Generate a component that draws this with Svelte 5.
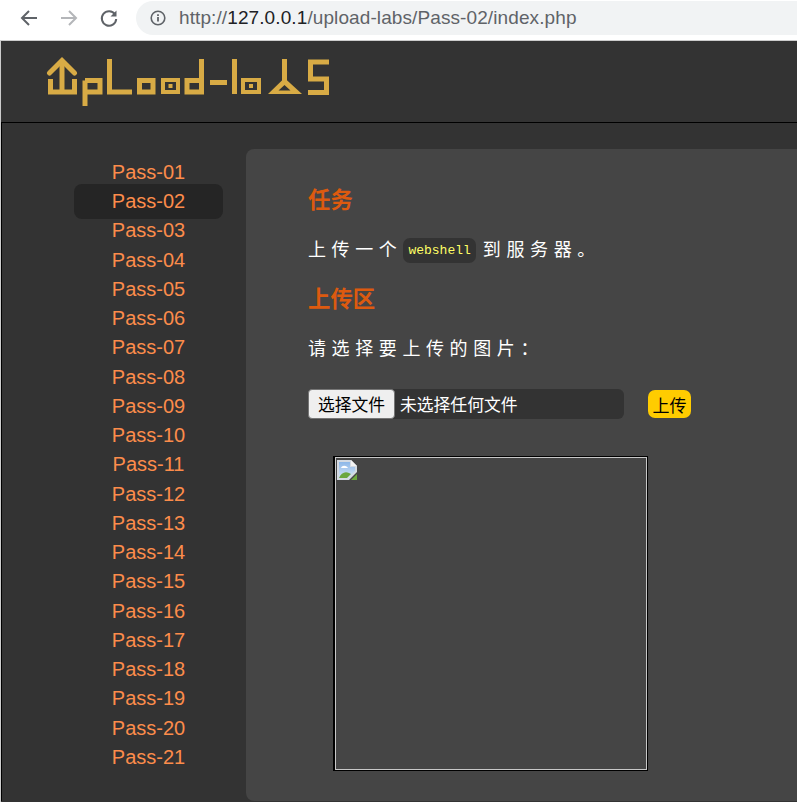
<script>
  const passes = Array.from({ length: 21 }, (_, i) => 'Pass-' + String(i + 1).padStart(2, '0'));
</script>

<div class="browser-bar">
  <div class="nav-icons">
    <svg class="nav-icon" width="20" height="20" viewBox="0 0 20 20" fill="none" stroke="#5f6368" stroke-width="2">
      <path d="M18 10H3M10 3l-7 7 7 7"/>
    </svg>
    <svg class="nav-icon" width="20" height="20" viewBox="0 0 20 20" fill="none" stroke="#b4b6b9" stroke-width="2">
      <path d="M2 10h15M10 3l7 7-7 7"/>
    </svg>
    <svg class="nav-icon" width="20" height="20" viewBox="0 0 20 20" fill="none" stroke="#5f6368" stroke-width="2">
      <path d="M16 6.500A7.200 7.200 0 1 0 17.200 11"/>
      <path d="M17.500 2.500v6h-6z" fill="#5f6368" stroke="none"/>
    </svg>
  </div>
  <div class="address">
    <svg width="16" height="16" viewBox="0 0 16 16" fill="none" stroke="#5f6368">
      <circle cx="8" cy="8" r="6.800" stroke-width="1.600"/>
      <path d="M8 7v4.600M8 4.200v1.700" stroke-width="1.800"/>
    </svg>
    <span class="url"><span class="dim">http://</span>127.0.0.1<span class="dim">/upload-labs/Pass-02/index.php</span></span>
  </div>
</div>

<div class="page">
  <header class="header">
    <!-- logo traced in page coordinates -->
    <svg class="logo" width="286" height="54" viewBox="46 56 286 54" fill="none" stroke="#d8ab45" stroke-width="5" aria-label="UpLoad-labS">
      <path d="M49.500 73 62 60.500 74.500 73" stroke-linecap="round"/>
      <path d="M62 60v32"/>
      <path d="M50.500 79v13h24V79"/>
      <path d="M85 80.500h15v11.500H85M85 80.500V106" />
      <path d="M109.500 59v33H132"/>
      <path d="M139.500 80.500h13.500V92h-13.500z"/>
      <path d="M163 80h15v12h-15z" stroke-width="4"/>
      <path d="M168.500 84h4v4h-4z" fill="#d8ab45" stroke="none"/>
      <path d="M201.500 59V92H187V80.500h14.500"/>
      <path d="M210 82.500h17"/>
      <path d="M234.500 59V94"/>
      <path d="M243 80h16v12h-16z" stroke-width="4"/>
      <path d="M249 84h4v4h-4z" fill="#d8ab45" stroke="none"/>
      <path d="M284.500 59V82"/>
      <path d="M268 94 284.500 78 302 94zM278.500 90.500h12L284.500 85z" fill="#d8ab45" fill-rule="evenodd" stroke="none"/>
      <path d="M329 62h-18.500v17h16v13.500H308"/>
    </svg>
  </header>

  <div class="layout">
    <nav class="menu">
      {#each passes as pass}
        <a href="#{pass}" class="menu-item" class:active={pass === 'Pass-02'}>{pass}</a>
      {/each}
    </nav>

    <main class="card">
      <h2>任务</h2>
      <p class="task">上传一个<code>webshell</code>到服务器。</p>
      <h2 class="second">上传区</h2>
      <p class="hint">请选择要上传的图片：</p>
      <form class="upload" onsubmit={(e) => e.preventDefault()}>
        <div class="file-box">
          <button type="button" class="file-btn">选择文件</button>
          <span class="file-name">未选择任何文件</span>
        </div>
        <button class="submit">上传</button>
      </form>
      <div class="preview">
        <div class="preview-inner">
          <svg width="21" height="20" viewBox="0 0 21 20">
            <defs>
              <linearGradient id="sky" x1="0" y1="0" x2="0" y2="1">
                <stop offset="0" stop-color="#8db7e8"/>
                <stop offset="1" stop-color="#d5e5f5"/>
              </linearGradient>
            </defs>
            <path d="M0 0h14l6 6v6l-8 8H0z" fill="#d4dae2"/>
            <path d="M2 2h11v5h5v4l-7 7H2z" fill="url(#sky)"/>
            <path d="M14 0l6 6h-6z" fill="#f4f4f4"/>
            <path d="M4 8c1-3 5-3 7 0z" fill="#fff"/>
            <path d="M2 18c2-5 6-7 10-5l2 1-4 4z" fill="#6ca73f"/>
            <path d="M14 20l6-6v6z" fill="#6ca73f"/>
          </svg>
        </div>
      </div>
    </main>
  </div>
</div>

<style>
  :global(body) {
    margin: 0;
    background: #ccc;
    font-family: "Liberation Sans", "Noto Sans CJK SC", sans-serif;
    overflow: hidden;
  }

  .browser-bar {
    height: 41px;
    background: #fff;
    border-bottom: 1px solid #ccc;
    display: flex;
    align-items: flex-start;
    box-sizing: border-box;
    padding-left: 19px;
  }

  .nav-icons {
    display: flex;
    gap: 20px;
    padding-top: 8px;
  }

  .address {
    margin-left: 17px;
    margin-top: 1px;
    flex: 1;
    height: 34px;
    background: #f1f3f4;
    border-radius: 17px 0 0 17px;
    display: flex;
    align-items: center;
    gap: 13px;
    padding-left: 14px;
  }

  .url {
    font-size: 19px;
    color: #202124;
    letter-spacing: 0.1px;
  }

  .dim {
    color: #5f6368;
  }

  .page {
    margin-left: 1px;
    background: #333;
    height: 761px;
    overflow: hidden;
  }

  .header {
    height: 81px;
    box-sizing: border-box;
    padding: 15px 0 0 45px;
  }

  .logo {
    display: block;
  }

  .layout {
    display: flex;
    align-items: flex-start;
    border-top: 1px solid #000;
    border-left: 1px solid #000;
    padding-top: 26px;
    height: 679px;
    box-sizing: border-box;
  }

  .menu {
    width: 149px;
    margin: 9px 23px 0 72px;
    display: flex;
    flex-direction: column;
  }

  .menu-item {
    height: 29.250px;
    line-height: 29.250px;
    text-align: center;
    font-size: 20px;
    color: #fc8c4b;
    text-decoration: none;
    border-radius: 6px;
  }

  .menu-item.active {
    background: #252525;
    height: 35px;
    line-height: 35px;
    margin: -3px 0 -3px;
    border-radius: 8px;
  }

  .card {
    flex: 1;
    height: 652px;
    background: #454545;
    border-radius: 8px 0 0 8px;
    box-sizing: border-box;
    padding: 38px 0 0 62px;
    color: #fff;
  }

  h2 {
    margin: 0;
    font-size: 22.400px;
    line-height: 28px;
    font-weight: 700;
    color: #dd5a0f;
  }

  h2.second {
    margin-top: 22px;
  }

  .task {
    margin: 21px 0 0;
    font-size: 18px;
    line-height: 28px;
    letter-spacing: 5.600px;
    display: flex;
    align-items: center;
  }

  code {
    font-family: "Liberation Mono", monospace;
    font-size: 13px;
    letter-spacing: 0;
    color: #ffff66;
    background: #333;
    border-radius: 7px;
    padding: 0 5px;
    line-height: 25px;
    margin: 1px 7px 0 1px;
  }

  .hint {
    margin: 21px 0 0;
    font-size: 18px;
    line-height: 28px;
    letter-spacing: 5.600px;
  }

  .upload {
    margin-top: 26px;
    display: flex;
    align-items: center;
    gap: 24px;
  }

  .file-box {
    width: 316px;
    height: 30px;
    background: #333;
    border-radius: 6px;
    display: flex;
    align-items: center;
  }

  .file-btn {
    width: 87px;
    height: 30px;
    padding: 0;
    background: #efefef;
    border: 1px solid #767676;
    border-radius: 4px;
    color: #000;
    font-family: inherit;
    font-size: 16.800px;
  }

  .file-name {
    margin-left: 5px;
    font-size: 16.800px;
    color: #fff;
  }

  .submit {
    width: 43px;
    height: 28px;
    padding: 0;
    border: 0;
    border-radius: 7px;
    background: #fc0;
    color: #000;
    font-family: inherit;
    font-size: 17px;
  }

  .preview {
    margin: 37px 0 0 25px;
    width: 315px;
    height: 315px;
    box-sizing: border-box;
    border: 1px solid #000;
    border-left-width: 2px;
  }

  .preview-inner {
    height: 100%;
    box-sizing: border-box;
    border: 1px solid #c8c8c8;
    padding: 2px 1px;
  }

  .preview-inner svg {
    display: block;
  }
</style>
